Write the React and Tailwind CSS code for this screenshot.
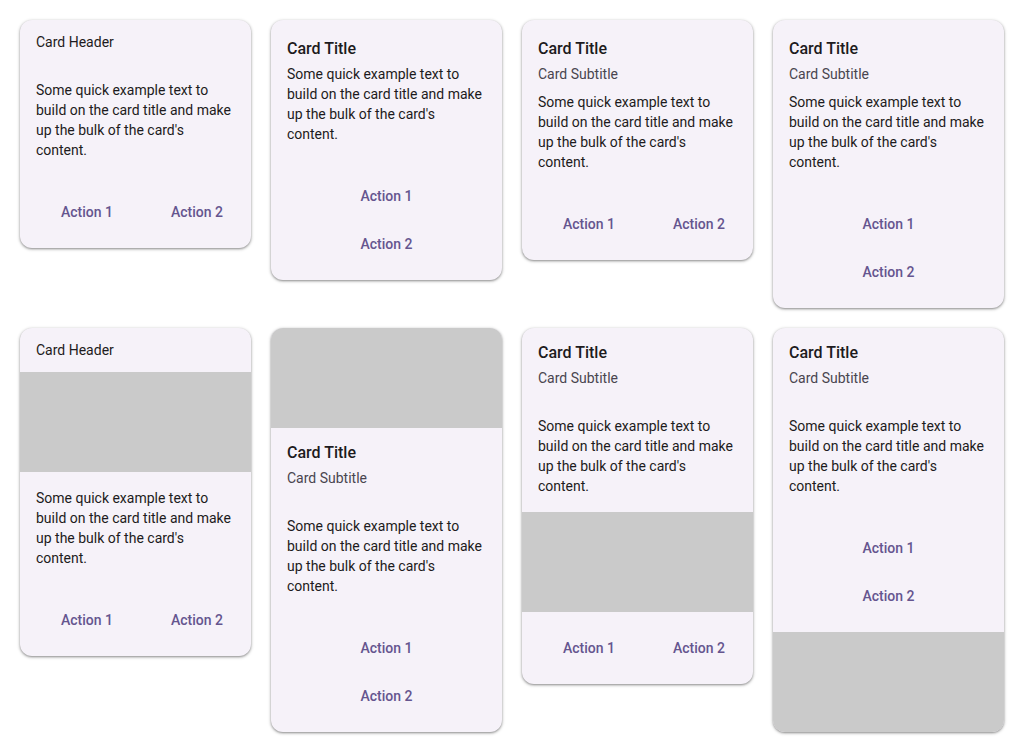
const body =
  "Some quick example text to build on the card title and make up the bulk of the card's content.";

function Card({ children }) {
  return (
    <div className="bg-[#f6f2f9] rounded-xl overflow-hidden shadow-[0_1px_3px_1px_rgba(0,0,0,0.15),0_1px_2px_0_rgba(0,0,0,0.3)] text-[#1d1b20]">
      {children}
    </div>
  );
}

function Header() {
  return <div className="px-4 py-3 text-sm leading-5">Card Header</div>;
}

function TitleHeader() {
  return (
    <div className="px-4 py-3">
      <div className="pt-[1px] text-base leading-6 font-medium">Card Title</div>
      <div className="mt-[3px] text-sm leading-5 text-[#49454f]">Card Subtitle</div>
    </div>
  );
}

function Body({ title, subtitle }) {
  return (
    <div className="p-4">
      {title && (
        <div className="pt-[1px] text-base leading-6 font-medium mb-[3px]">Card Title</div>
      )}
      {subtitle && (
        <div className="text-sm leading-5 text-[#49454f] mb-2">Card Subtitle</div>
      )}
      <p className="text-sm leading-5">{body}</p>
    </div>
  );
}

function Image() {
  return <div className="h-[100px] bg-[#cacaca]" />;
}

function ActionsRow() {
  return (
    <div className="px-4 py-4 flex justify-end gap-[35px]">
      <button className="w-[76px] h-10 pl-[2px] rounded-full text-sm font-medium text-[#65558f]">
        Action 1
      </button>
      <button className="w-[76px] h-10 rounded-full text-sm font-medium text-[#65558f]">
        Action 2
      </button>
    </div>
  );
}

function ActionsCol() {
  return (
    <div className="p-4 flex flex-col gap-2">
      <button className="h-10 rounded-full text-sm font-medium text-[#65558f]">Action 1</button>
      <button className="h-10 rounded-full text-sm font-medium text-[#65558f]">Action 2</button>
    </div>
  );
}

export default function App() {
  return (
    <div className="min-h-screen bg-white p-5 grid grid-cols-4 gap-5 items-start font-['Roboto',sans-serif]">
      <Card>
        <Header />
        <Body />
        <ActionsRow />
      </Card>
      <Card>
        <Body title />
        <ActionsCol />
      </Card>
      <Card>
        <Body title subtitle />
        <ActionsRow />
      </Card>
      <Card>
        <Body title subtitle />
        <ActionsCol />
      </Card>

      <Card>
        <Header />
        <Image />
        <Body />
        <ActionsRow />
      </Card>
      <Card>
        <Image />
        <TitleHeader />
        <Body />
        <ActionsCol />
      </Card>
      <Card>
        <TitleHeader />
        <Body />
        <Image />
        <ActionsRow />
      </Card>
      <Card>
        <TitleHeader />
        <Body />
        <ActionsCol />
        <Image />
      </Card>
    </div>
  );
}
